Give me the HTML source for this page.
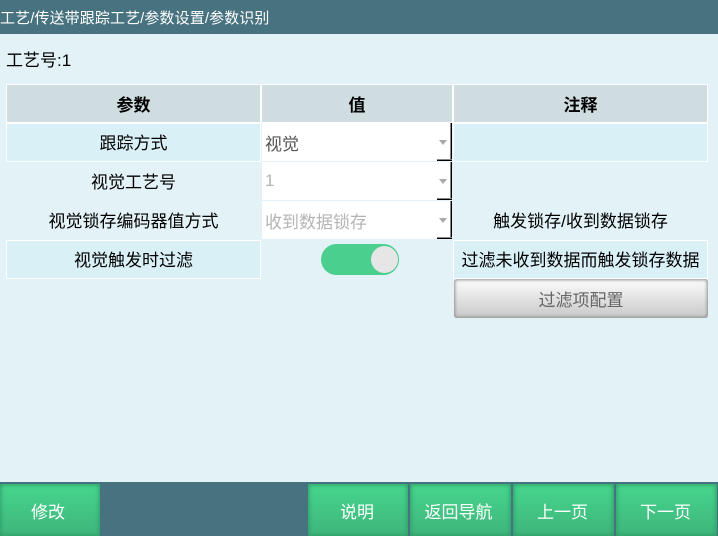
<!DOCTYPE html>
<html lang="zh">
<head>
<meta charset="utf-8">
<style>
html,body{margin:0;padding:0}
body{width:718px;height:536px;overflow:hidden;position:relative;background:#e3f2f7;font-family:"Liberation Sans","Noto Sans CJK SC",sans-serif;font-size:17px;color:#000}
div{position:absolute;box-sizing:border-box}
.c{display:flex;align-items:center;justify-content:center;white-space:nowrap}
.c span{position:relative;top:-1px}
.hd{background:#cfdce0;border:1px solid #fff;font-weight:bold}
.hd span{top:0}
.lt{background:#daf0f7;border:1px solid #fff}
.sel{background:#fff;left:262px;width:190px;height:38px;color:#555;display:flex;align-items:center;padding-left:3px}
.sel.dis{color:#b4b4b4}
.sel:before{content:"";position:absolute;right:0;top:0;width:2px;height:38px;background:linear-gradient(90deg,#888 0,#888 50%,#000 50%)}
.sel:after{content:"";position:absolute;right:0;bottom:0;width:15px;height:2px;background:linear-gradient(#888 0,#888 50%,#000 50%)}
.ar{position:absolute;right:5px;top:17px;width:0;height:0;border-left:4px solid transparent;border-right:4px solid transparent;border-top:5px solid #aaa}
.btn{top:484px;height:52px;background:linear-gradient(#46d78d,#3eb47b);box-shadow:inset 0 0 4px 1px #2f9c68;color:#fff;font-size:17px}
.btn span{top:0}
</style>
</head>
<body>
<div style="left:0;top:0;width:718px;height:34px;background:#47727f;color:#fff;font-size:15px;letter-spacing:.1px;display:flex;align-items:center;white-space:nowrap">工艺/传送带跟踪工艺/参数设置/参数识别</div>
<div style="left:6px;top:49px;line-height:24px;white-space:nowrap">工艺号:1</div>

<div class="c hd" style="left:6px;top:84px;width:255px;height:39px"><span>参数</span></div>
<div class="c hd" style="left:261px;top:84px;width:192px;height:39px"><span>值</span></div>
<div class="c hd" style="left:453px;top:84px;width:255px;height:39px"><span>注释</span></div>

<div class="c lt" style="left:6px;top:123px;width:255px;height:39px"><span>跟踪方式</span></div>
<div class="sel" style="top:123px">视觉<i class="ar"></i></div>
<div class="lt" style="left:453px;top:123px;width:255px;height:39px"></div>

<div class="c" style="left:6px;top:162px;width:255px;height:39px"><span>视觉工艺号</span></div>
<div class="sel dis" style="top:162px">1<i class="ar"></i></div>

<div class="c" style="left:6px;top:201px;width:255px;height:39px"><span>视觉锁存编码器值方式</span></div>
<div class="sel dis" style="top:201px">收到数据锁存<i class="ar"></i></div>
<div class="c" style="left:453px;top:201px;width:255px;height:39px"><span>触发锁存/收到数据锁存</span></div>

<div class="c lt" style="left:6px;top:240px;width:255px;height:39px"><span>视觉触发时过滤</span></div>
<div style="left:321px;top:244px;width:78px;height:31px;border-radius:16px;background:#4bcf8e"></div>
<div style="left:371px;top:246px;width:27px;height:27px;border-radius:50%;background:#e6e6e6"></div>
<div class="c lt" style="left:453px;top:240px;width:255px;height:39px"><span>过滤未收到数据而触发锁存数据</span></div>

<div class="c" style="left:454px;top:279px;width:254px;height:39px;background:linear-gradient(#fdfdfd,#c8c8c8);box-shadow:inset 0 0 3px 1px #8e8e8e;color:#666;border-radius:3px"><span style="top:0">过滤项配置</span></div>

<div style="left:0;top:482px;width:718px;height:54px;background:#47727f"></div>
<div class="c btn" style="left:0;width:100px;padding-right:4px"><span>修改</span></div>
<div class="c btn" style="left:308px;width:100px;padding-right:2px"><span>说明</span></div>
<div class="c btn" style="left:410px;width:101px;padding-right:4px"><span>返回导航</span></div>
<div class="c btn" style="left:513px;width:101px;padding-right:2px"><span>上一页</span></div>
<div class="c btn" style="left:616px;width:101px;padding-right:2px"><span>下一页</span></div>
</body>
</html>
